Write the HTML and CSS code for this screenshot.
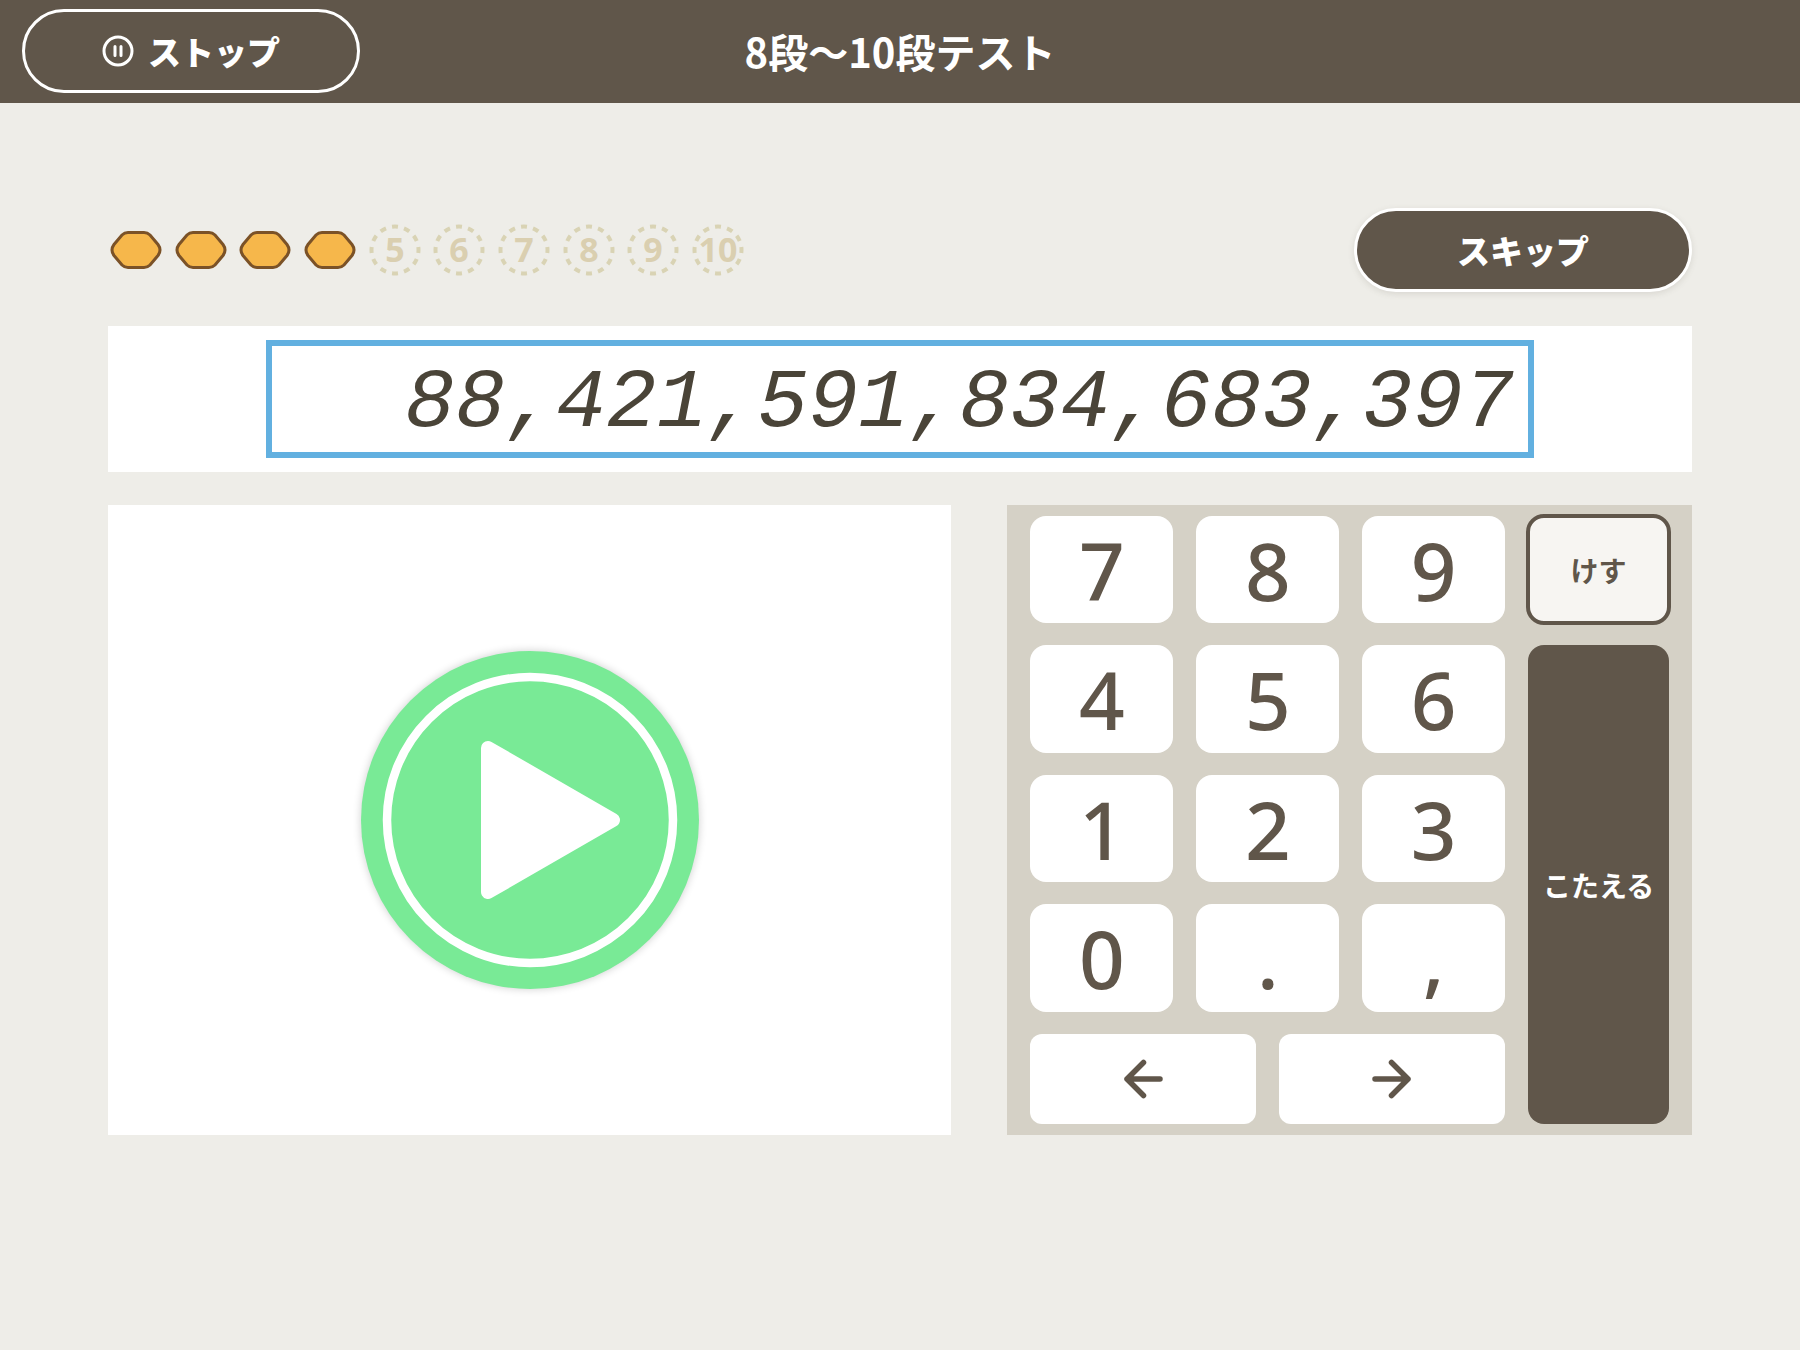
FILE: index.html
```
<!DOCTYPE html>
<html lang="ja">
<head>
  <meta charset="UTF-8" />
  <meta name="viewport" content="width=device-width, initial-scale=1" />
  <title>8段〜10段テスト</title>
  <link rel="stylesheet" href="styles.css">
</head>
<body>
  <header class="topbar">
    <button type="button" class="pill pill-stop">
      <svg class="icon-pause" viewBox="0 0 32 32" aria-hidden="true">
        <circle cx="16" cy="16" r="14" />
        <path d="M13 11.5v9M19 11.5v9" />
      </svg>
      ストップ
    </button>
    <h1>8段〜10段テスト</h1>
  </header>

  <main>
    <div class="status">
      <ol class="progress" id="progress"></ol>
      <button type="button" class="pill pill-skip">スキップ</button>
    </div>

    <section class="answer">
      <input type="text" id="answer" class="answer-box" value="88,421,591,834,683,397" aria-label="こたえ" readonly />
    </section>

    <div class="board">
      <section class="player">
        <button type="button" class="play" aria-label="再生">
          <svg viewBox="0 0 338 338" aria-hidden="true">
            <circle class="play-ring" cx="169" cy="169" r="143" />
            <path class="play-mark" d="M127 97L252 169L127 241Z" />
          </svg>
        </button>
      </section>

      <section class="keypad" id="keypad">
        <button type="button" class="key">7</button>
        <button type="button" class="key">8</button>
        <button type="button" class="key">9</button>
        <button type="button" class="key-erase">けす</button>
        <button type="button" class="key">4</button>
        <button type="button" class="key">5</button>
        <button type="button" class="key">6</button>
        <button type="button" class="key-submit">こたえる</button>
        <button type="button" class="key">1</button>
        <button type="button" class="key">2</button>
        <button type="button" class="key">3</button>
        <button type="button" class="key">0</button>
        <button type="button" class="key">.</button>
        <button type="button" class="key">,</button>
        <button type="button" class="key-arrow" aria-label="左へ">
          <svg viewBox="0 0 40 40" aria-hidden="true"><path d="M37 20H4M20.500 3.500L4 20L20.500 36.500" /></svg>
        </button>
        <button type="button" class="key-arrow" aria-label="右へ">
          <svg viewBox="0 0 40 40" aria-hidden="true"><path d="M3 20H36M19.500 3.500L36 20L19.500 36.500" /></svg>
        </button>
      </section>
    </div>
  </main>

  <script src="script.js"></script>
</body>
</html>
```

FILE: styles.css
```
* {
  box-sizing: border-box;
}
body {
  margin: 0;
  background: #eeede8;
  color: #60564a;
  font-family: 'Noto Sans CJK JP', sans-serif;
}
button {
  padding: 0;
  border: none;
  font-family: inherit;
  color: inherit;
  cursor: pointer;
}
.topbar {
  display: grid;
  grid-template-columns: 1fr auto 1fr;
  align-items: center;
  padding: 9px 22px 10px;
  background: #60564a;
  color: #fff;
}
h1 {
  margin: 0;
  font-size: 40px;
  line-height: 48px;
  font-weight: 700;
}
.pill {
  display: flex;
  align-items: center;
  justify-content: center;
  gap: 14px;
  width: 338px;
  height: 84px;
  border: 3px solid #fff;
  border-radius: 42px;
  background: #60564a;
  color: #fff;
  font-size: 33px;
  font-weight: 900;
}
.pill-skip {
  box-shadow: 0 2px 6px rgba(96, 86, 74, 0.15);
}
.icon-pause {
  width: 32px;
  height: 32px;
  fill: none;
  stroke: #fff;
  stroke-width: 3;
  stroke-linecap: round;
}
main {
  padding: 105px 6% 60px;
}
.status {
  display: flex;
  align-items: center;
  justify-content: space-between;
  margin-bottom: 34px;
}
.progress {
  display: flex;
  justify-content: space-between;
  width: 638px;
  margin: 0;
  padding: 0 2px;
  list-style: none;
}
.progress svg {
  display: block;
  width: 52px;
  height: 52px;
  overflow: visible;
}
.done {
  fill: #f6b74b;
  stroke: #7b5227;
  stroke-width: 3;
}
.todo-ring {
  fill: none;
  stroke: #d9d3b4;
  stroke-width: 4;
}
.todo-num {
  fill: #dacfb0;
  font-family: 'Noto Sans', sans-serif;
  font-size: 34px;
  font-weight: 700;
  text-anchor: middle;
}
.answer {
  padding: 14px 0;
  background: #fff;
}
.answer-box {
  display: block;
  width: 80%;
  height: 118px;
  margin: 0 auto;
  padding: 8px 14px 0;
  border: 6px solid #62b0e0;
  border-radius: 0;
  outline: none;
  background: #fff;
  color: #4a4438;
  font-family: 'Liberation Mono', monospace;
  font-size: 84px;
  font-style: italic;
  text-align: right;
}
.board {
  display: grid;
  grid-template-columns: 844fr 685fr;
  gap: 56px;
  min-height: 630px;
  margin-top: 33px;
}
.player {
  display: flex;
  align-items: center;
  justify-content: center;
  background: #fff;
}
.play {
  width: 338px;
  height: 338px;
  border-radius: 50%;
  background: #79ea96;
  box-shadow: 0 0 8px rgba(0, 0, 0, 0.2);
}
.play svg {
  display: block;
}
.play-ring {
  fill: none;
  stroke: #fff;
  stroke-width: 8.5;
}
.play-mark {
  fill: #fff;
  stroke: #fff;
  stroke-width: 14;
  stroke-linejoin: round;
}
.keypad {
  display: grid;
  grid-template-columns: repeat(6, 60fr) 141fr;
  grid-template-rows: repeat(4, 107fr) 90fr;
  gap: 22px 23px;
  padding: 11px 23px;
  background: #d5d1c6;
}
.key {
  grid-column: span 2;
  border-radius: 16px;
  background: #fff;
  font-family: 'Noto Sans', sans-serif;
  font-size: 80px;
  line-height: 96px;
  font-weight: 500;
}
.key-erase {
  border-radius: 16px;
  outline: 4px solid #60564a;
  outline-offset: -2px;
  background: #f7f5f2;
  font-size: 28px;
  font-weight: 700;
}
.key-submit {
  grid-column: 7;
  grid-row: 2 / 6;
  border-radius: 16px;
  background: #60564a;
  color: #fff;
  font-size: 28px;
  font-weight: 700;
}
.key-arrow {
  display: flex;
  align-items: center;
  justify-content: center;
  grid-column: span 3;
  border-radius: 12px;
  background: #fff;
}
.key-arrow svg {
  width: 40px;
  height: 40px;
  fill: none;
  stroke: #60564a;
  stroke-width: 5.5;
  stroke-linecap: round;
  stroke-linejoin: round;
}
```

FILE: script.js
```
const total = 10;
const answered = 4;

const progress = document.getElementById('progress');
const answer = document.getElementById('answer');

function drawProgress() {
  let html = '';
  for (let i = 1; i <= total; i++) {
    if (i <= answered) {
      html += `<li><svg viewBox="0 0 52 52">
        <path class="done" d="M18 8.500H34Q37.500 8.500 40 11L48 20.500Q52 26 48 31.500L40 41Q37.500 43.500 34 43.500H18Q14.500 43.500 12 41L4 31.500Q0 26 4 20.500L12 11Q14.500 8.500 18 8.500Z" />
      </svg></li>`;
    } else {
      html += `<li><svg viewBox="0 0 52 52">
        <circle class="todo-ring" cx="26" cy="26" r="23.500" pathLength="120" stroke-dasharray="5 5" stroke-dashoffset="2.500" />
        <text class="todo-num" x="26" y="38">${i}</text>
      </svg></li>`;
    }
  }
  progress.innerHTML = html;
}

document.getElementById('keypad').addEventListener('click', e => {
  if (e.target.className === 'key') {
    answer.value += e.target.textContent;
  }
  if (e.target.className === 'key-erase') {
    answer.value = answer.value.slice(0, -1);
  }
});

drawProgress();
```
